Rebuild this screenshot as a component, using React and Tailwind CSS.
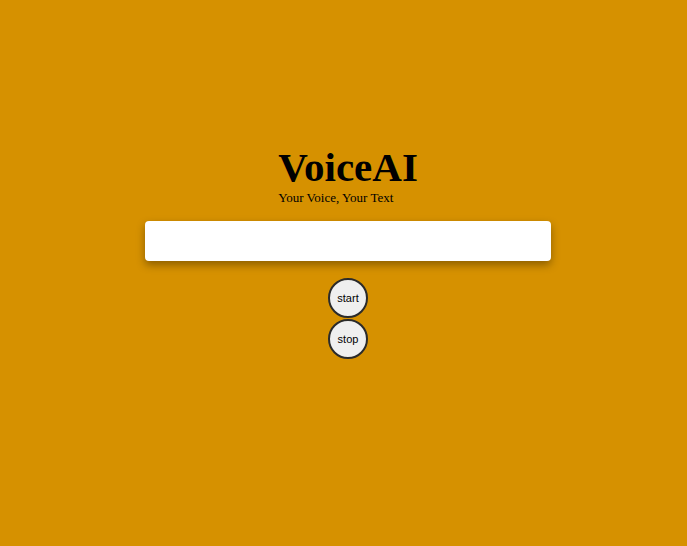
export default function App() {
  return (
    <div className="min-h-screen w-full bg-[#d69100] flex flex-col items-center pt-[145px] pl-[9px]">
      <div className="flex flex-col items-start">
        <h1 className="font-['Liberation_Serif',serif] text-[41px] font-bold text-black leading-[45px]">
          VoiceAI
        </h1>
        <p className="font-['Liberation_Serif',serif] text-[13px] text-black leading-[15px]">
          Your Voice, Your Text
        </p>
      </div>

      <div className="mt-[16px] w-[406px] h-[40px] bg-white rounded-[4px] shadow-[0_4px_8px_rgba(0,0,0,0.35)]"></div>

      <div className="mt-[17px] flex flex-col items-center gap-[1px]">
        <button className="w-[40px] h-[40px] rounded-full border-2 border-[#2b2b2b] bg-[#efefef] font-['Liberation_Sans',sans-serif] text-[11px] text-black">
          start
        </button>
        <button className="w-[40px] h-[40px] rounded-full border-2 border-[#2b2b2b] bg-[#efefef] font-['Liberation_Sans',sans-serif] text-[11px] text-black">
          stop
        </button>
      </div>
    </div>
  );
}
